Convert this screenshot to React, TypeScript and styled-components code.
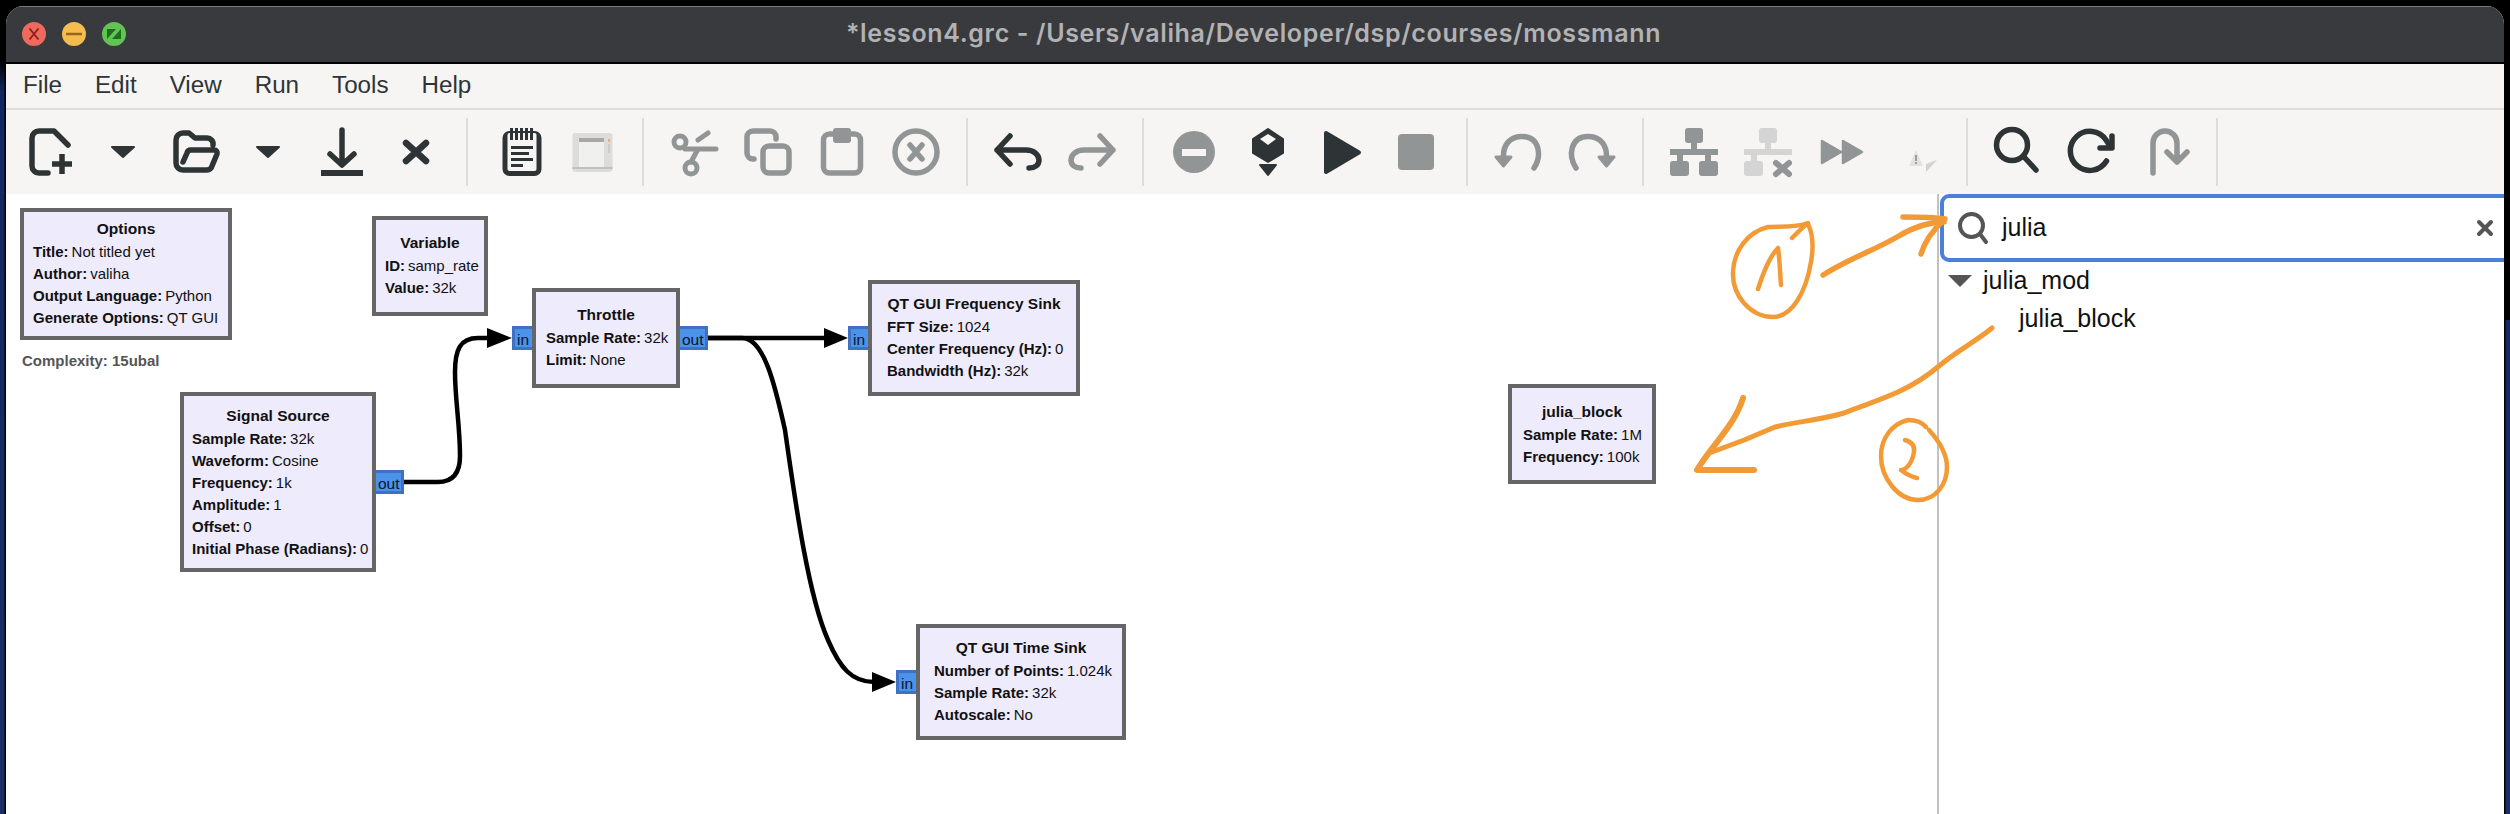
import React from 'react';
import styled, { createGlobalStyle } from 'styled-components';

const DK = '#2e3436';
const GR = '#929595';
const LT = '#d4d4d4';
const BG = '#f6f5f4';
const OX = 6;
const OY = 194;

const Global = createGlobalStyle`
  html, body { margin: 0; padding: 0; height: 100%; overflow: hidden; background: #000; }
  #root { height: 100%; }
  * { box-sizing: border-box; }
`;

const Desktop = styled.div`
  position: relative;
  width: 2510px;
  height: 814px;
  padding: 6px 6px 0 6px;
  background:
    linear-gradient(#000, #000) right top / 8px 320px no-repeat,
    linear-gradient(to bottom, #000 0, #000 60px, #13275f 92px, #1c3067 100%);
  font-family: "Liberation Sans", Arial, sans-serif;
`;

const Window = styled.div`
  position: relative;
  width: 2498px;
  height: 808px;
  display: flex;
  flex-direction: column;
  overflow: hidden;
  background: #fff;
  border-radius: 18px 18px 0 0;
  box-shadow: 0 0 0 1.5px #000;
`;

const TitleBar = styled.div`
  position: relative;
  flex: 0 0 58px;
  display: flex;
  align-items: center;
  justify-content: center;
  background: #393a3d;
  border-top: 1px solid #7c7c7e;
  border-bottom: 2px solid #000;
`;

const Lights = styled.div`
  position: absolute;
  left: 16px;
  top: 15px;
  display: flex;
  gap: 16px;
`;

const Light = styled.div<{ $c: string }>`
  width: 24px;
  height: 24px;
  border-radius: 50%;
  background: ${p => p.$c};
  display: flex;
  align-items: center;
  justify-content: center;
`;

const Title = styled.div`
  font-family: Inter, "Liberation Sans", sans-serif;
  font-size: 25px;
  font-weight: 600;
  letter-spacing: 0.65px;
  color: #b2b2b4;
  margin: -3px 3px 0 0;
  white-space: nowrap;
`;

const MenuBar = styled.div`
  flex: 0 0 46px;
  display: flex;
  align-items: center;
  gap: 33px;
  padding: 0 0 2px 17px;
  background: ${BG};
  border-bottom: 2px solid #e0dedb;
`;

const MenuItem = styled.span`
  font-size: 24.2px;
  color: ${DK};
`;

const Toolbar = styled.div`
  flex: 0 0 84px;
  display: flex;
  align-items: center;
  padding-left: 9px;
  background: ${BG};
`;

const ToolCell = styled.div<{ $w?: number; $pr?: number }>`
  flex: 0 0 ${p => p.$w ?? 74}px;
  height: 48px;
  display: flex;
  justify-content: center;
  padding-right: ${p => p.$pr ?? 0}px;
`;

const Sep = styled.div`
  flex: 0 0 2px;
  height: 68px;
  margin: 0 13px;
  background: #dedddb;
`;

const Glyph = styled.svg`
  width: 48px;
  height: 48px;
  overflow: visible;
  flex: none;
`;

const S: React.FC<{ c?: string; w?: number; children: React.ReactNode }> = ({ c = DK, w = 5.5, children }) => (
  <Glyph viewBox="0 0 48 48" fill="none" stroke={c} strokeWidth={w} strokeLinecap="round" strokeLinejoin="round">
    {children}
  </Glyph>
);

const Main = styled.div`
  flex: 1;
  display: flex;
  min-height: 0;
`;

const Canvas = styled.div`
  position: relative;
  flex: 0 0 1931px;
  background: #fff;
`;

const Wires = styled.svg`
  position: absolute;
  left: 0;
  top: 0;
  width: 1931px;
  height: 620px;
`;

const Block = styled.div<{ $x: number; $y: number; $w: number; $h: number; $pt: number; $pl: number }>`
  position: absolute;
  left: ${p => p.$x - OX}px;
  top: ${p => p.$y - OY}px;
  width: ${p => p.$w}px;
  height: ${p => p.$h}px;
  padding: ${p => p.$pt}px 0 0 ${p => p.$pl}px;
  background: #eeebfc;
  border: 4px solid #666;
  color: #111;
  font-size: 15px;
  line-height: 22px;
  white-space: nowrap;
`;

const BlockTitle = styled.div<{ $pl: number }>`
  font-size: 15.5px;
  font-weight: 700;
  text-align: center;
  margin: 0 0 1px -${p => p.$pl}px;
`;

const Row = styled.div``;
const Key = styled.b`
  margin-right: 3px;
`;

const Port = styled.div<{ $x: number; $y: number; $w: number; $out?: boolean }>`
  position: absolute;
  left: ${p => p.$x - OX}px;
  top: ${p => p.$y - OY}px;
  width: ${p => p.$w}px;
  height: 24px;
  background: #4a92ea;
  border: 3px solid #3f70c4;
  ${p => (p.$out ? 'border-left: 0; padding-left: 2px;' : 'border-right: 0; padding-left: 2px;')}
  color: #08152c;
  font-size: 15.5px;
  line-height: 22px;
  white-space: nowrap;
`;

const Complexity = styled.div`
  position: absolute;
  left: ${22 - OX}px;
  top: ${350 - OY}px;
  font-size: 15px;
  line-height: 22px;
  font-weight: 700;
  color: #555;
`;

const Sidebar = styled.div`
  flex: 1;
  min-width: 0;
  overflow: hidden;
  border-left: 2px solid #c4c2be;
  background: #fff;
`;

const Search = styled.div`
  width: calc(100% + 8px);
  margin-left: 1px;
  height: 68px;
  display: flex;
  align-items: center;
  border: 4px solid #4a80db;
  border-radius: 9px;
  padding: 0 16px 0 14px;
`;

const SearchText = styled.span`
  flex: 1;
  margin: 0 0 2px 14px;
  font-size: 25px;
  color: #111;
`;

const SmallGlyph = styled.svg<{ $s: number }>`
  width: ${p => p.$s}px;
  height: ${p => p.$s}px;
  flex: none;
  overflow: visible;
`;

const TreeRow = styled.div<{ $indent: number }>`
  height: 38px;
  display: flex;
  align-items: center;
  padding: 0 0 2px ${p => p.$indent}px;
  font-size: 25px;
  color: #111;
`;

const Disclosure = styled.span`
  width: 0;
  height: 0;
  margin: 2px 11px 0 0;
  border-left: 12px solid transparent;
  border-right: 12px solid transparent;
  border-top: 12px solid #555;
`;

const Annotations = styled.svg`
  position: absolute;
  left: 0;
  top: 0;
  width: 2510px;
  height: 814px;
  pointer-events: none;
`;

const NewIcon = () => (
  <S>
    <path d="M20 45H11a7 7 0 0 1-7-7V10a7 7 0 0 1 7-7H26L40 17" />
    <path d="M34 26V46M24 36H44" strokeLinecap="butt" strokeWidth={5.5} />
  </S>
);
const Drop = () => (
  <S w={2}>
    <path d="M13 19H35L24 29Z" fill={DK} />
  </S>
);
const OpenIcon = () => (
  <S>
    <path d="M10 34L14 25a4 4 0 0 1 4-3H41a3 3 0 0 1 3 4L39 38a5 5 0 0 1-5 4H10a7 7 0 0 1-7-7V12a7 7 0 0 1 7-7H16l6 5H34a6 6 0 0 1 6 7" />
  </S>
);
const SaveIcon = () => (
  <S>
    <path d="M24 2V36M12 26L24 37L36 26" />
    <rect x="3" y="42" width="42" height="6" fill={DK} stroke="none" />
  </S>
);
const CloseIcon = () => (
  <S w={6.5}>
    <path d="M14 15L34 33M34 15L14 33" />
  </S>
);
const ReportIcon = () => (
  <S w={0}>
    <g transform="translate(2 0)">
      <rect x="6.5" y="3" width="39" height="45" rx="7" fill={DK} />
      <rect x="11.5" y="5" width="29" height="38" rx="2" fill={BG} />
      {[14, 19, 24, 29, 34].map(x => (
        <rect key={x} x={x} y="0" width="3" height="12" fill={DK} />
      ))}
      <rect x="15" y="18" width="22" height="3" fill={DK} />
      <rect x="15" y="24" width="18" height="3" fill={DK} />
      <rect x="15" y="30" width="22" height="3" fill={DK} />
      <rect x="15" y="36" width="12" height="3" fill={DK} />
    </g>
  </S>
);
const ScreenIcon = () => (
  <S w={0}>
    <rect x="4.5" y="5" width="40" height="39" rx="3" fill="#dcdcda" />
    <rect x="11" y="10" width="25" height="29" fill="#f0f0ee" />
    <rect x="11" y="10" width="25" height="4" fill="#a8a8a8" />
    <rect x="40" y="11" width="2" height="3" fill="#e8b080" />
    <rect x="40" y="16" width="2" height="9" fill="#cccccc" />
    <rect x="4.5" y="39" width="40" height="2" fill="#c0c0be" />
  </S>
);
const CutIcon = () => (
  <S c={GR} w={5}>
    <circle cx="10" cy="14" r="6" />
    <circle cx="21" cy="40" r="6" />
    <path d="M15 21H46M21 34L28 21M28 12L38 5" />
  </S>
);
const CopyIcon = () => (
  <S c={GR}>
    <path d="M10 31H9a6 6 0 0 1-6-6V9a6 6 0 0 1 6-6H26a6 6 0 0 1 6 6V11" />
    <rect x="19" y="18" width="26" height="27" rx="6" />
  </S>
);
const PasteIcon = () => (
  <S c={GR}>
    <rect x="5.5" y="6" width="37" height="39" rx="6" />
    <rect x="15" y="0" width="18" height="15" rx="3" fill={GR} stroke="none" />
  </S>
);
const DeleteIcon = () => (
  <S c={GR}>
    <circle cx="24" cy="24" r="21" />
    <path d="M18 17L30 31M30 17L18 31" />
  </S>
);
const UndoIcon = () => (
  <S>
    <path d="M16 8L3 22L16 36M3 22H32C40 22 45 27 45 32C45 37 41 40 35 40" />
  </S>
);
const RedoIcon = () => (
  <S c={GR}>
    <path d="M32 8L45 22L32 36M45 22H16C8 22 3 27 3 32C3 37 7 40 13 40" />
  </S>
);
const DisableIcon = () => (
  <S w={0}>
    <circle cx="24" cy="24" r="21" fill={GR} />
    <rect x="12" y="21" width="24" height="7" fill={BG} />
  </S>
);
const GenerateIcon = () => (
  <S w={2}>
    <path d="M24 1L39 11V25L24 34L9 25V11Z" fill={DK} />
    <path d="M24 6L32 11L24 17L16 11Z" fill={BG} stroke="none" />
    <path d="M16 37H32L24 47Z" fill={DK} />
  </S>
);
const PlayIcon = () => (
  <S w={4}>
    <path d="M8 5L41 24.5L8 44Z" fill={DK} />
  </S>
);
const StopIcon = () => (
  <S w={0}>
    <rect x="6" y="6" width="36" height="36" rx="4" fill={GR} />
  </S>
);
const RotL = () => (
  <S c={GR} w={5.5}>
    <path d="M40 40C48 28 46 8 27 8.5C15 9 9 18 9.5 29" />
    <path d="M2 29H17L9.5 38Z" fill={GR} strokeWidth={3} />
  </S>
);
const RotR = () => (
  <S c={GR} w={5.5}>
    <path d="M8 40C0 28 2 8 21 8.5C33 9 39 18 38.5 29" />
    <path d="M46 29H31L38.5 38Z" fill={GR} strokeWidth={3} />
  </S>
);
const Hier: React.FC<{ c: string; x?: boolean }> = ({ c, x }) => (
  <S w={0}>
    <rect x="15" y="0" width="18" height="15" rx="3" fill={c} />
    <rect x="21" y="14" width="6" height="8" fill={c} />
    <rect x="0" y="21" width="48" height="6" fill={c} />
    <rect x="7" y="26" width="6" height="8" fill={c} />
    <rect x="0" y="33" width="19" height="15" rx="3" fill={c} />
    {x ? (
      <path d="M32 35L45 46M45 35L32 46" stroke={GR} strokeWidth={6} fill="none" />
    ) : (
      <>
        <rect x="35" y="26" width="6" height="8" fill={c} />
        <rect x="29" y="33" width="19" height="15" rx="3" fill={c} />
      </>
    )}
  </S>
);
const FFIcon = () => (
  <S w={2.5}>
    <path d="M4 13V35L23 24Z M25 13V35L44 24Z" fill={GR} stroke={GR} />
  </S>
);
const ErrIcon = () => (
  <S w={0}>
    <path d="M24 22L31 38H17Z" fill="#e2e2e2" />
    <rect x="23.2" y="27" width="1.6" height="6" fill="#8a8a8a" />
    <rect x="23.2" y="34" width="1.6" height="2" fill="#8a8a8a" />
    <path d="M45 32L34 44V36Z" fill="#d2d2d2" />
  </S>
);
const FindIcon = () => (
  <S>
    <circle cx="18" cy="17" r="15.5" />
    <path d="M31 30L42 42" />
  </S>
);
const RefreshIcon = () => (
  <S>
    <path d="M38.5 33A19.5 19.5 0 1 1 38 12L42 18" fill="none" />
    <path d="M44 8V20H32" />
  </S>
);
const BackIcon = () => (
  <S c={GR}>
    <path d="M11 45V15a12 12 0 0 1 24 0V33M25 24L35 34L45 24" />
  </S>
);

type BlockData = {
  x: number; y: number; w: number; h: number; pt: number; pl: number;
  title: string; rows: [string, string][];
};

const blocks: BlockData[] = [
  { x: 20, y: 208, w: 212, h: 132, pt: 6, pl: 9, title: 'Options', rows: [['Title:', 'Not titled yet'], ['Author:', 'valiha'], ['Output Language:', 'Python'], ['Generate Options:', 'QT GUI']] },
  { x: 372, y: 216, w: 116, h: 100, pt: 12, pl: 9, title: 'Variable', rows: [['ID:', 'samp_rate'], ['Value:', '32k']] },
  { x: 180, y: 392, w: 196, h: 180, pt: 9, pl: 8, title: 'Signal Source', rows: [['Sample Rate:', '32k'], ['Waveform:', 'Cosine'], ['Frequency:', '1k'], ['Amplitude:', '1'], ['Offset:', '0'], ['Initial Phase (Radians):', '0']] },
  { x: 532, y: 288, w: 148, h: 100, pt: 12, pl: 10, title: 'Throttle', rows: [['Sample Rate:', '32k'], ['Limit:', 'None']] },
  { x: 868, y: 280, w: 212, h: 116, pt: 9, pl: 15, title: 'QT GUI Frequency Sink', rows: [['FFT Size:', '1024'], ['Center Frequency (Hz):', '0'], ['Bandwidth (Hz):', '32k']] },
  { x: 916, y: 624, w: 210, h: 116, pt: 9, pl: 14, title: 'QT GUI Time Sink', rows: [['Number of Points:', '1.024k'], ['Sample Rate:', '32k'], ['Autoscale:', 'No']] },
  { x: 1508, y: 384, w: 148, h: 100, pt: 13, pl: 11, title: 'julia_block', rows: [['Sample Rate:', '1M'], ['Frequency:', '100k']] },
];

const ports = [
  { x: 376, y: 470, w: 28, out: true, t: 'out' },
  { x: 512, y: 326, w: 20, t: 'in' },
  { x: 680, y: 326, w: 28, out: true, t: 'out' },
  { x: 848, y: 326, w: 20, t: 'in' },
  { x: 896, y: 670, w: 20, t: 'in' },
];

const menu = ['File', 'Edit', 'View', 'Run', 'Tools', 'Help'];

const ORANGE = '#f29a35';

export default function App() {
  return (
    <Desktop>
      <Global />
      <Window>
        <TitleBar>
          <Lights>
            <Light $c="#ee6a5f">
              <SmallGlyph $s={12} viewBox="0 0 12 12" fill="none" stroke="#8e1c12" strokeWidth={1.8}><path d="M1.5 0.5L10.5 11.5M10.5 0.5L1.5 11.5" /></SmallGlyph>
            </Light>
            <Light $c="#f5bd4f">
              <SmallGlyph $s={16} viewBox="0 0 16 16" fill="none" stroke="#99661a" strokeWidth={2.4}><path d="M0 8H16" /></SmallGlyph>
            </Light>
            <Light $c="#61c454">
              <SmallGlyph $s={14} viewBox="0 0 14 14"><path d="M0 2H9L0 12Z M14 12H5L14 2Z" fill="#1c6d1c" /></SmallGlyph>
            </Light>
          </Lights>
          <Title>*lesson4.grc - /Users/valiha/Developer/dsp/courses/mossmann</Title>
        </TitleBar>
        <MenuBar>
          {menu.map(m => <MenuItem key={m}>{m}</MenuItem>)}
        </MenuBar>
        <Toolbar>
          <ToolCell><NewIcon /></ToolCell>
          <ToolCell $w={71} $pr={4}><Drop /></ToolCell>
          <ToolCell><OpenIcon /></ToolCell>
          <ToolCell $w={71} $pr={4}><Drop /></ToolCell>
          <ToolCell><SaveIcon /></ToolCell>
          <ToolCell><CloseIcon /></ToolCell>
          <Sep />
          <ToolCell><ReportIcon /></ToolCell>
          <ToolCell><ScreenIcon /></ToolCell>
          <Sep />
          <ToolCell><CutIcon /></ToolCell>
          <ToolCell><CopyIcon /></ToolCell>
          <ToolCell><PasteIcon /></ToolCell>
          <ToolCell><DeleteIcon /></ToolCell>
          <Sep />
          <ToolCell><UndoIcon /></ToolCell>
          <ToolCell><RedoIcon /></ToolCell>
          <Sep />
          <ToolCell><DisableIcon /></ToolCell>
          <ToolCell><GenerateIcon /></ToolCell>
          <ToolCell><PlayIcon /></ToolCell>
          <ToolCell><StopIcon /></ToolCell>
          <Sep />
          <ToolCell><RotL /></ToolCell>
          <ToolCell><RotR /></ToolCell>
          <Sep />
          <ToolCell><Hier c={GR} /></ToolCell>
          <ToolCell><Hier c={LT} x /></ToolCell>
          <ToolCell><FFIcon /></ToolCell>
          <ToolCell><ErrIcon /></ToolCell>
          <Sep />
          <ToolCell><FindIcon /></ToolCell>
          <ToolCell><RefreshIcon /></ToolCell>
          <ToolCell><BackIcon /></ToolCell>
          <Sep />
        </Toolbar>
        <Main>
          <Canvas>
            <Wires viewBox={`${OX} ${OY} 1931 620`} fill="none">
              <g stroke="#000" strokeWidth={4.5}>
                <path d="M404 482H438C452 482 460 474 460 456C460 425 455 400 455 372C455 350 460 338 478 338H490" />
                <path d="M708 338H826" />
                <path d="M708 338H742C764 338 775 385 785 430C795 500 808 595 828 640C840 668 852 682 874 682" />
              </g>
              <path d="M487 328L512 338L487 348Z M824 328L848 338L824 348Z M872 672L896 682L872 692Z" fill="#000" />
            </Wires>
            <Complexity>Complexity: 15ubal</Complexity>
            {ports.map(p => (
              <Port key={`${p.x}`} $x={p.x} $y={p.y} $w={p.w} $out={p.out}>{p.t}</Port>
            ))}
            {blocks.map(b => (
              <Block key={b.title} $x={b.x} $y={b.y} $w={b.w} $h={b.h} $pt={b.pt} $pl={b.pl}>
                <BlockTitle $pl={b.pl}>{b.title}</BlockTitle>
                {b.rows.map(([k, v]) => (
                  <Row key={k}><Key>{k}</Key>{v}</Row>
                ))}
              </Block>
            ))}
          </Canvas>
          <Sidebar>
            <Search>
              <SmallGlyph $s={30} viewBox="0 0 30 30" fill="none" stroke="#555" strokeWidth={4} strokeLinecap="round">
                <circle cx="13.5" cy="12.5" r="11.5" />
                <path d="M22 21L28 29" />
              </SmallGlyph>
              <SearchText>julia</SearchText>
              <SmallGlyph $s={16} viewBox="0 0 16 16" fill="none" stroke="#555" strokeWidth={4} strokeLinecap="round">
                <path d="M2 2L14 14M14 2L2 14" />
              </SmallGlyph>
            </Search>
            <TreeRow $indent={9}><Disclosure />julia_mod</TreeRow>
            <TreeRow $indent={80}>julia_block</TreeRow>
          </Sidebar>
        </Main>
      </Window>
      <Annotations viewBox="0 0 2510 814" fill="none" stroke={ORANGE} strokeWidth={4.5} strokeLinecap="round" strokeLinejoin="round">
        <path d="M1792 238C1798 232 1804 226 1808 223C1796 228 1780 226 1768 227C1748 232 1734 250 1733 272C1732 295 1750 317 1773 317C1792 317 1806 292 1811 262C1814 245 1812 232 1808 224" />
        <path d="M1758 289C1764 270 1770 256 1778 248C1780 262 1780 274 1781 285" />
        <path d="M1823 275C1850 258 1875 250 1897 237C1915 226 1930 222 1944 222" strokeWidth={5.5} />
        <path d="M1903 217C1918 217 1932 217 1945 219C1935 228 1925 240 1921 254" strokeWidth={5.5} />
        <path d="M1992 328C1975 342 1958 350 1939 366C1905 395 1870 402 1844 413C1820 420 1795 422 1775 427C1755 436 1735 444 1712 452" strokeWidth={5} />
        <path d="M1743 398C1735 425 1712 445 1697 470H1754" strokeWidth={6} />
        <path d="M1926 427C1922 422 1915 420 1908 420C1892 424 1881 438 1881 456C1881 478 1898 500 1918 500C1936 500 1947 484 1947 467C1947 452 1938 440 1929 430" />
        <path d="M1905 440C1912 442 1915 446 1914 452C1913 458 1911 464 1906 468C1904 470 1902 470 1901 470C1906 474 1912 477 1917 478" />
      </Annotations>
    </Desktop>
  );
}
